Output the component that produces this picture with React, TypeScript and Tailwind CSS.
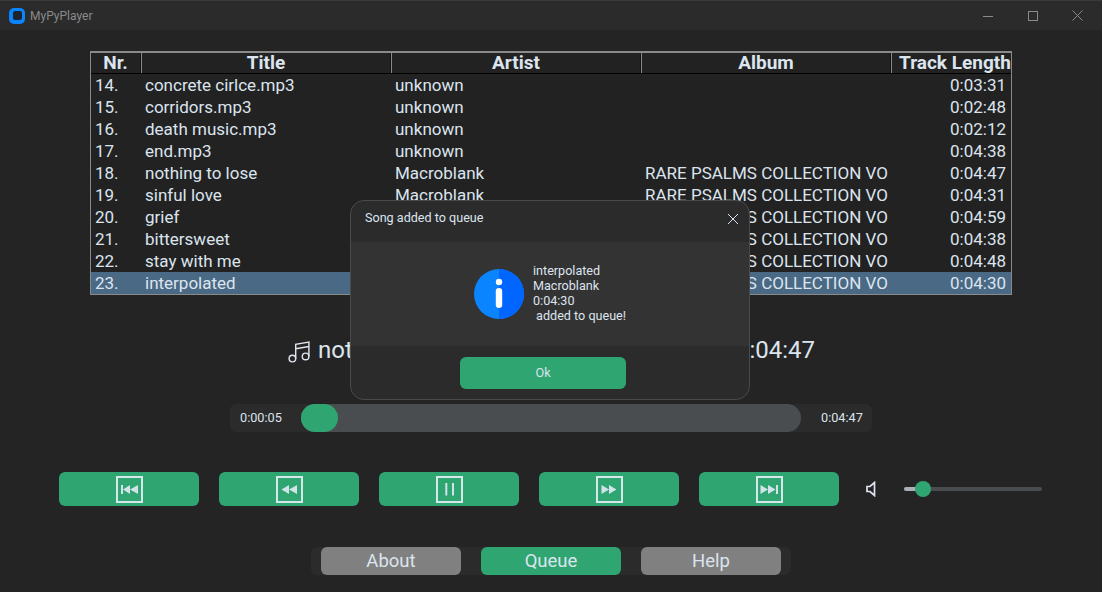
import React from "react";

const tracks = [
  { nr: "14.", title: "concrete cirlce.mp3", artist: "unknown", album: "", length: "0:03:31" },
  { nr: "15.", title: "corridors.mp3", artist: "unknown", album: "", length: "0:02:48" },
  { nr: "16.", title: "death music.mp3", artist: "unknown", album: "", length: "0:02:12" },
  { nr: "17.", title: "end.mp3", artist: "unknown", album: "", length: "0:04:38" },
  { nr: "18.", title: "nothing to lose", artist: "Macroblank", album: "RARE PSALMS COLLECTION VO", length: "0:04:47" },
  { nr: "19.", title: "sinful love", artist: "Macroblank", album: "RARE PSALMS COLLECTION VO", length: "0:04:31" },
  { nr: "20.", title: "grief", artist: "Macroblank", album: "RARE PSALMS COLLECTION VO", length: "0:04:59" },
  { nr: "21.", title: "bittersweet", artist: "Macroblank", album: "RARE PSALMS COLLECTION VO", length: "0:04:38" },
  { nr: "22.", title: "stay with me", artist: "Macroblank", album: "RARE PSALMS COLLECTION VO", length: "0:04:48" },
  { nr: "23.", title: "interpolated", artist: "Macroblank", album: "RARE PSALMS COLLECTION VO", length: "0:04:30" },
];

const columns = "grid grid-cols-[50px_250px_250px_250px_120px]";

const HeaderCell = ({ label }: { label: string }) => (
  <div className="border-l border-[#8a8a8a] first:border-l-0 border-r border-r-[#111111] last:border-r-0 last:pl-[7px] text-center last:text-left whitespace-nowrap">
    {label}
  </div>
);

const TransportIcon = ({ children }: { children: React.ReactNode }) => (
  <svg width="27" height="27" viewBox="0 0 27 27" fill="#d4e2ea">
    <rect x="1" y="1" width="25" height="25" fill="none" stroke="#d4e8ea" strokeWidth="2" />
    {children}
  </svg>
);

const transport = [
  <TransportIcon key="first">
    <rect x="5" y="9" width="2" height="9" />
    <path d="M7 13.500 14 9v9zM14 13.500 22 9v9z" />
  </TransportIcon>,
  <TransportIcon key="back">
    <path d="M5.500 13.500 13 9v9zM13 13.500 21 9v9z" />
  </TransportIcon>,
  <TransportIcon key="pause">
    <rect x="9.300" y="7" width="2" height="12.500" />
    <rect x="16" y="7" width="2" height="12.500" />
  </TransportIcon>,
  <TransportIcon key="forward">
    <path d="M5.500 9l7.500 4.500L5.500 18zM13 9l7.500 4.500L13 18z" />
  </TransportIcon>,
  <TransportIcon key="last">
    <path d="M4.500 9l7.500 4.500L4.500 18zM12 9l7.500 4.500L12 18z" />
    <rect x="20" y="9" width="2" height="9" />
  </TransportIcon>,
];

export default function App() {
  return (
    <div className="relative w-[1102px] h-[592px] overflow-hidden bg-[#242424] text-[#dce4ee] font-['Roboto',sans-serif]">
      {/* window title bar */}
      <div className="flex items-center h-[30px] bg-[#2b2b2b] border-t border-[#3a3a3a]">
        <div className="ml-[9px] w-4 h-4 rounded-[5px] bg-[#0a84ff] flex items-center justify-center">
          <div className="w-[9px] h-[9px] rounded-[2px] bg-[#1c2430]" />
        </div>
        <span className="ml-[5px] text-xs text-[#8a8a8a]">MyPyPlayer</span>
        <div className="ml-auto flex items-center text-[#8a8a8a]">
          <div className="w-[45px] flex justify-center">
            <svg width="10" height="10" viewBox="0 0 10 10" stroke="currentColor"><path d="M0 5.500h10" /></svg>
          </div>
          <div className="w-[45px] flex justify-center">
            <svg width="10" height="10" viewBox="0 0 10 10" fill="none" stroke="currentColor"><rect x="0.500" y="0.500" width="9" height="9" /></svg>
          </div>
          <div className="w-[45px] flex justify-center mr-[2px]">
            <svg width="11" height="11" viewBox="0 0 11 11" stroke="currentColor"><path d="M0.500 0.500l10 10M10.500 0.500l-10 10" /></svg>
          </div>
        </div>
      </div>

      {/* track table */}
      <div className="mt-[21px] ml-[90px] w-[922px] h-[244px] border border-[#8a8a8a] bg-[#222222] text-[17px] leading-[22px]">
        <div className={`${columns} h-[22px] border-t border-t-[#8a8a8a] border-b border-b-black font-bold text-[19px] leading-[20px]`}>
          <HeaderCell label="Nr." />
          <HeaderCell label="Title" />
          <HeaderCell label="Artist" />
          <HeaderCell label="Album" />
          <HeaderCell label="Track Length" />
        </div>
        {tracks.map((t) => (
          <div key={t.nr} className={`${columns} h-[22px] ${t.nr === "23." ? "bg-[#4a6984]" : ""}`}>
            <div className="pl-1">{t.nr}</div>
            <div className="pl-1">{t.title}</div>
            <div className="pl-1">{t.artist}</div>
            <div className="pl-1 whitespace-nowrap">{t.album}</div>
            <div className="pr-[5px] text-right">{t.length}</div>
          </div>
        ))}
      </div>

      {/* now playing */}
      <div className="mt-[41px] mx-auto w-[528px] h-[28px] flex items-center text-2xl leading-7 whitespace-nowrap">
        <svg width="22" height="22" viewBox="2 2 20 20" fill="none" stroke="#dce4ee" strokeWidth="1.300" className="ml-px mr-2 mt-1">
          <path d="M9 18V5l12-2v13M9 9l12-2" />
          <circle cx="6" cy="18" r="3" />
          <circle cx="18" cy="16" r="3" />
        </svg>
        <span>nothing to lose</span>
        <span className="ml-auto">0:04:47</span>
      </div>

      {/* progress */}
      <div className="mt-[40px] mx-auto w-[642px] h-[28px] rounded-md bg-[#2b2b2b] flex items-center text-[12.700px]">
        <span className="w-[71px] pl-[10px]">0:00:05</span>
        <div className="w-[500px] h-[28px] rounded-[14px] bg-[#4a4d50]">
          <div className="w-[37px] h-[28px] rounded-[14px] bg-[#2fa572]" />
        </div>
        <span className="ml-[20px]">0:04:47</span>
      </div>

      {/* transport */}
      <div className="mt-[40px] ml-[59px] flex items-center">
        <div className="flex gap-5">
          {transport.map((icon, i) => (
            <div key={i} className="w-[140px] h-[34px] rounded-md bg-[#2fa572] flex items-center justify-center">
              {icon}
            </div>
          ))}
        </div>
        <svg width="12" height="16" viewBox="0 0 12 16" fill="none" stroke="#dce4ee" strokeWidth="1.700" className="ml-[27px]">
          <path d="M8.500 1.500v13L4 10.500H1v-5h3z" />
        </svg>
        <div className="relative ml-[26px] w-[138px] h-1 rounded-full bg-[#4a4d50]">
          <div className="w-[19px] h-1 rounded-l-full bg-[#aab0b5]" />
          <div className="absolute left-[11px] top-[-6px] w-4 h-4 rounded-full bg-[#2fa572]" />
        </div>
      </div>

      {/* bottom nav */}
      <div className="mt-[41px] mx-auto w-[480px] h-[28px] rounded-md bg-[#2b2b2b] flex justify-center gap-5 text-[18.500px] leading-7">
        <div className="w-[140px] rounded-md bg-[#808080] text-center">About</div>
        <div className="w-[140px] rounded-md bg-[#2fa572] text-center">Queue</div>
        <div className="w-[140px] rounded-md bg-[#808080] text-center">Help</div>
      </div>

      {/* song added dialog */}
      <div className="absolute left-[350px] top-[200px] w-[400px] h-[200px] rounded-[14px] border border-[#4a4a4a] bg-[#2b2b2b] overflow-hidden text-[12.600px]">
        <div className="h-[41px] flex items-center justify-between pl-[14px] pr-[11px] pb-[6px]">
          <span>Song added to queue</span>
          <svg width="10" height="10" viewBox="0 0 10 10" stroke="#dce4ee"><path d="M0 0l10 10M10 0L0 10" /></svg>
        </div>
        <div className="h-[104px] bg-[#333333] flex items-center pl-[123px] gap-[9px]">
          <svg width="50" height="50" viewBox="0 0 50 50">
            <circle cx="25" cy="25" r="25" fill="#0a84ff" />
            <path d="M25 0a25 25 0 0 1 0 50z" fill="#0066ff" />
            <circle cx="25" cy="13" r="3.200" fill="#fff" />
            <rect x="21.800" y="19" width="6.400" height="20" rx="3.200" fill="#fff" />
          </svg>
          <div className="leading-[15px] whitespace-pre pb-[2px]">
            <div>interpolated</div>
            <div>Macroblank</div>
            <div>0:04:30</div>
            <div> added to queue!</div>
          </div>
        </div>
        <div className="pt-[11px] pl-[109px]">
          <div className="w-[166px] h-8 rounded-md bg-[#2fa572] flex items-center justify-center">Ok</div>
        </div>
      </div>
    </div>
  );
}
